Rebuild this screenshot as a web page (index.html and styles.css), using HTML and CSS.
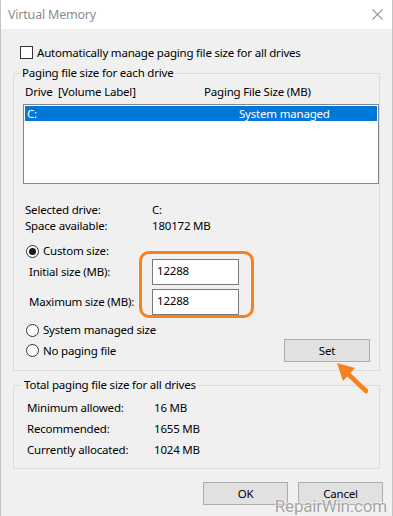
FILE: index.html
```html
<!DOCTYPE html>
<html lang="en">
  <head>
    <meta charset="UTF-8" />
    <meta name="viewport" content="width=device-width, initial-scale=1.0" />
    <title>Virtual Memory</title>
    <link rel="stylesheet" href="styles.css">
  </head>
  <body>
    <div class="window">
      <!-- Title bar -->
      <div class="titlebar">
        <span class="title">Virtual Memory</span>
        <svg class="close" width="11" height="11" viewBox="0 0 11 11">
          <path d="M0.5 0.5 L10.5 10.5 M10.5 0.5 L0.5 10.5" stroke="#9a9a9a" stroke-width="1.1" fill="none" />
        </svg>
      </div>

      <div class="content">
        <div class="check-row">
          <span class="checkbox"></span>
          <span>Automatically manage paging file size for all drives</span>
        </div>

        <!-- Paging file per drive -->
        <fieldset class="group group-drives">
          <legend>Paging file size for each drive</legend>
          <div class="list-head">
            <span class="col-drive">Drive&nbsp;&nbsp;[Volume Label]</span>
            <span>Paging File Size (MB)</span>
          </div>
          <div class="listbox">
            <div class="list-row selected">
              <span class="col-drive">C:</span>
              <span>System managed</span>
            </div>
          </div>

          <div class="info">
            <span>Selected drive:</span><span>C:</span>
            <span>Space available:</span><span>180172 MB</span>
          </div>

          <div class="radio-row custom">
            <span class="radio checked"></span>
            <span>Custom size:</span>
          </div>
          <div class="size-row">
            <span class="size-label">Initial size (MB):</span>
            <div class="textbox">12288</div>
          </div>
          <div class="size-row second">
            <span class="size-label">Maximum size (MB):</span>
            <div class="textbox">12288</div>
          </div>
          <div class="radio-row managed">
            <span class="radio"></span>
            <span>System managed size</span>
          </div>
          <div class="set-row">
            <div class="radio-row">
              <span class="radio"></span>
              <span>No paging file</span>
            </div>
            <button class="btn btn-set">Set</button>
          </div>
        </fieldset>

        <!-- Totals -->
        <fieldset class="group group-total">
          <legend>Total paging file size for all drives</legend>
          <div class="totals">
            <span>Minimum allowed:</span><span>16 MB</span>
            <span>Recommended:</span><span>1655 MB</span>
            <span>Currently allocated:</span><span>1024 MB</span>
          </div>
        </fieldset>

        <div class="actions">
          <button class="btn btn-dialog">OK</button>
          <button class="btn btn-dialog">Cancel</button>
        </div>
      </div>

      <!-- annotations -->
      <div class="highlight"></div>
      <svg class="arrow" width="42" height="37" viewBox="0 0 42 37">
        <path d="M16 14 L35 32" stroke="#f5821f" stroke-width="4.5" stroke-linecap="round" />
        <polygon points="6,4 24,9 12,22" fill="#f5821f" />
      </svg>
      <div class="watermark">RepairWin.com</div>
    </div>
  </body>
</html>
```

FILE: styles.css
```css
  body {
    margin: 0;
    padding: 0;
    font-family: "Noto Sans", "Open Sans", sans-serif;
    font-size: 11.5px;
    letter-spacing: -0.2px;
    color: #000;
    background-color: #f0f0f0;
  }

  .window {
    position: relative;
    width: 391px;
    height: 516px;
    border-left: 1px solid #c4c4c4;
    border-right: 1px solid #c4c4c4;
    background-color: #f0f0f0;
    overflow: hidden;
  }

  /* Title bar */
  .titlebar {
    height: 29px;
    background-color: #fff;
    display: flex;
    align-items: center;
    justify-content: space-between;
    padding: 0 9px 0 7px;
  }

  .title {
    font-size: 12.5px;
    color: #8c8c8c;
  }

  .close {
    margin-top: -1px;
  }

  .content {
    padding: 0 12px;
  }

  .check-row {
    display: flex;
    align-items: center;
    gap: 4px;
    height: 16px;
    margin-top: 15px;
    padding-left: 7px;
  }

  .checkbox {
    width: 11px;
    height: 11px;
    border: 1px solid #333;
    background-color: #fff;
  }

  /* Group boxes */
  .group {
    margin: 0;
    min-width: 0;
    border: 1px solid #dcdcdc;
    line-height: 16px;
  }

  .group legend {
    padding: 0 2px;
    margin-left: -5px;
    line-height: 16px;
  }

  .group-drives {
    margin-top: 5px;
    padding: 3px 0 8px 11px;
  }

  .list-head,
  .list-row {
    display: flex;
  }

  .list-head .col-drive {
    width: 179px;
  }

  .listbox {
    margin: 4px 0 0 -2px;
    height: 76px;
    border: 1px solid #828790;
    background-color: #fff;
    padding: 1px;
  }

  .list-row {
    height: 15px;
    line-height: 15px;
    padding-left: 2px;
  }

  .list-row.selected {
    background-color: #0078d7;
    color: #fff;
  }

  .list-row .col-drive {
    width: 212px;
  }

  .info,
  .totals {
    display: grid;
    grid-template-columns: 127px auto;
  }

  .info {
    margin-top: 18px;
  }

  .radio-row {
    display: flex;
    align-items: center;
    gap: 4px;
    height: 16px;
    padding-left: 1px;
  }

  .radio-row.custom {
    margin-top: 9px;
  }

  .radio-row.managed {
    margin-top: 7px;
  }

  .radio {
    box-sizing: border-box;
    width: 13px;
    height: 13px;
    border: 1px solid #333;
    border-radius: 50%;
    background-color: #fff;
    display: flex;
    align-items: center;
    justify-content: center;
  }

  .radio.checked::after {
    content: "";
    width: 7px;
    height: 7px;
    border-radius: 50%;
    background-color: #1a1a1a;
  }

  .size-row {
    display: flex;
    align-items: center;
    height: 26px;
    padding-left: 4px;
  }

  .size-row.second {
    margin-top: 4px;
  }

  .size-label {
    width: 123px;
  }

  .textbox {
    box-sizing: border-box;
    width: 87px;
    height: 26px;
    border: 1px solid #7a7a7a;
    background-color: #fff;
    padding: 3px 0 0 4px;
  }

  .set-row {
    display: flex;
    align-items: center;
    justify-content: space-between;
    height: 23px;
    margin-top: 1px;
  }

  button {
    font-family: inherit;
    font-size: 11.5px;
    letter-spacing: -0.2px;
    color: #000;
    cursor: pointer;
  }

  .btn {
    box-sizing: border-box;
    height: 23px;
    background-color: #e1e1e1;
    border: 1px solid #adadad;
    padding: 0;
  }

  .btn-set {
    width: 86px;
    margin-right: 9px;
  }

  .group-total {
    margin-top: 6px;
    padding: 4px 0 8px 13px;
  }

  .totals {
    grid-auto-rows: 21px;
    align-items: center;
  }

  .actions {
    display: flex;
    justify-content: flex-end;
    gap: 10px;
    margin: 13px -3px 0 0;
  }

  .btn-dialog {
    width: 85px;
  }

  /* Annotations over the dialog */
  .highlight {
    position: absolute;
    left: 138px;
    top: 251px;
    width: 109px;
    height: 61px;
    border: 3px solid #f5821f;
    border-radius: 10px;
  }

  .arrow {
    position: absolute;
    left: 330px;
    top: 359px;
  }

  .watermark {
    position: absolute;
    right: 5px;
    bottom: 0;
    font-family: Roboto, sans-serif;
    font-size: 17px;
    letter-spacing: -0.2px;
    color: #a3a3a3;
    text-shadow: 0 0 1px #fff, 0 0 1px #fff, 0 0 2px #fff;
  }
```
